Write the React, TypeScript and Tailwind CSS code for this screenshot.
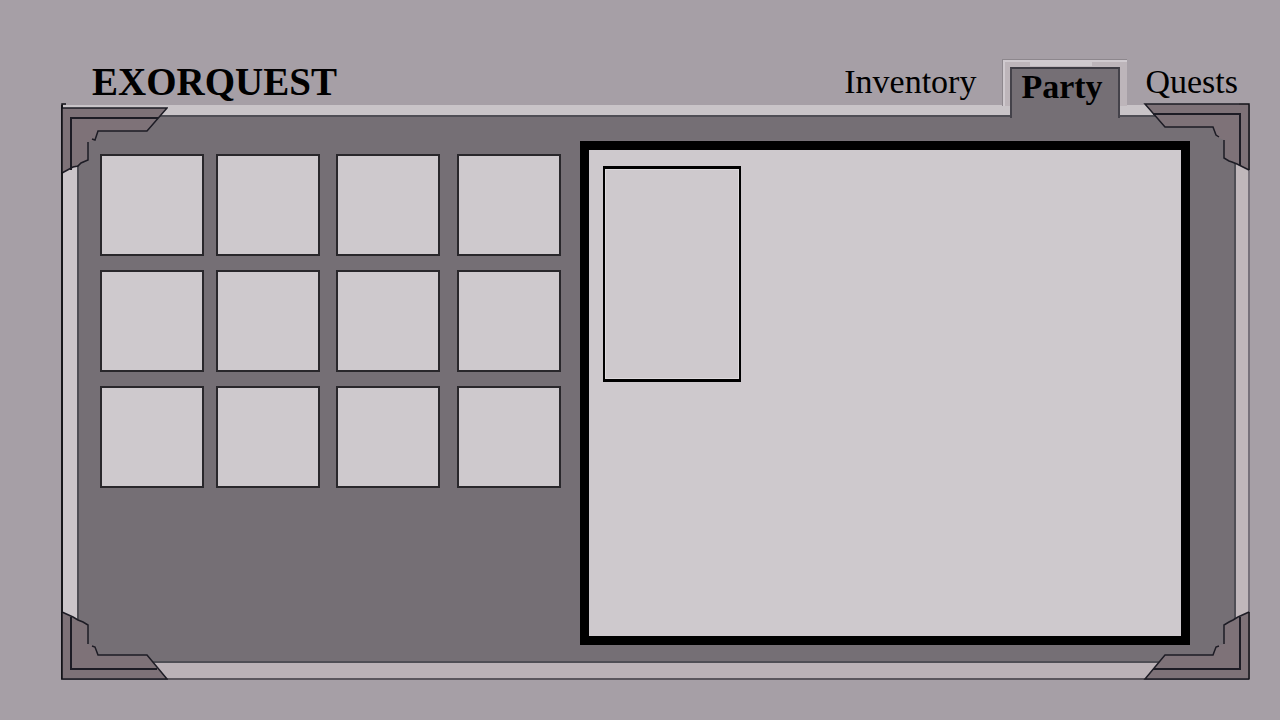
import { useState } from "react";

type CornerProps = { className: string; body: string; outline: string; edge: string; groove: string };

function Corner({ className, body, outline, edge, groove }: CornerProps) {
  return (
    <svg
      aria-hidden="true"
      viewBox="0 0 107 72"
      className={`pointer-events-none absolute h-[72px] w-[107px] ${className}`}
      fill="none"
      stroke="#1d1c25"
    >
      <path d={body} fill="#7e7278" stroke="none" />
      <path d={outline} strokeWidth="1.5" />
      <path d={groove} strokeWidth="2" />
      <path d={edge} stroke="#121217" strokeWidth="1.5" />
    </svg>
  );
}

const slots = Array.from({ length: 12 }, (_, i) => i + 1);
const tabs = ["Inventory", "Party", "Quests"];

export default function App() {
  const [selected, setSelected] = useState(0);

  return (
    <main className="flex min-h-screen flex-col bg-[#a69fa6] pt-[59px] pr-[30px] pb-10 pl-[61px] font-['Liberation_Serif',serif] text-black">
      <header className="flex h-[46px] items-start justify-between pr-3 pl-[31px]">
        <h1 className="text-[39px] leading-[46px] font-bold">EXORQUEST</h1>
        <nav className="flex items-start">
          {tabs.map((tab) =>
            tab === "Party" ? (
              <div
                key={tab}
                className="relative z-10 mr-[18px] ml-[26px] h-[47px] w-[125px] border-t border-l border-[#8d878d] bg-[#bdb5ba] px-[7px] pt-[7px] shadow-[inset_2px_2px_0_#d0cacf]"
              >
                <span className="absolute top-[2px] left-[27px] h-1 w-[62px] bg-[#cec9cd]" />
                <a
                  href="#party"
                  aria-current="page"
                  className="flex h-[51px] w-full border-x-2 border-t-2 border-x-[#44424a] border-t-[#3d3b43] bg-[#756f75] pl-[9px] text-[34px] leading-[36px] font-bold"
                >
                  {tab}
                </a>
              </div>
            ) : (
              <a key={tab} href={`#${tab.toLowerCase()}`} className="text-[34px] leading-[46px]">
                {tab}
              </a>
            ),
          )}
        </nav>
      </header>

      <section
        aria-label="Party"
        className="relative flex grow flex-col border-r-2 border-b-2 border-l-2 border-r-[#77717a] border-b-[#5b565d] border-l-[#17171b]"
      >
        <div className="flex grow flex-col border-t-[10px] border-r-[12px] border-b-[15px] border-l-[14px] border-t-[#c9c4c8] border-r-[#c0b7bb] border-b-[#bbb2b7] border-l-[#cbc5ca]">
          <div className="flex grow items-stretch border-2 border-[#4f4e55] bg-[#756f75] pt-6 pr-11 pb-4 pl-[21px]">
            <div className="grid shrink-0 grid-cols-[116px_120px_121px_104px] content-start gap-y-[14px] pt-[13px]">
              {slots.map((slot) => (
                <button
                  key={slot}
                  type="button"
                  aria-label={`Slot ${slot}`}
                  aria-pressed={selected === slot}
                  onClick={() => setSelected(slot)}
                  className="h-[102px] w-[104px] border-2 border-[#29272b] bg-[#cec9cd]"
                />
              ))}
            </div>
            <div className="ml-[19px] grow border-[9px] border-black bg-[#cec9cd] px-[14px] py-4">
              <div className="h-[216px] w-[138px] border-x-2 border-y-[3px] border-black shadow-[inset_0_0_0_1px_#dedadd]" />
            </div>
          </div>
        </div>

        <Corner
          className="-top-[2px] -left-[2px]"
          body="M1 5H106L86 28H37L34 37L27 39V57L1 70Z"
          outline="M1 5H106L86 28H37L34 37L31 36M27 39V57L20 60L17 63L12 64L1 70"
          groove="M10 67V15H97"
          edge="M5 1H1V71"
        />
        <Corner
          className="-top-[2px] -right-[2px]"
          body="M2 1H106V67L81 55V37L74 34L70 24H22Z"
          outline="M96 1H2L22 24H70L73 32L76 34M81 37V55L86 58L89 59L94 61L106 67"
          groove="M10 11H97V63"
          edge="M96 1H106V67"
        />
        <Corner
          className="-bottom-[2px] -left-[2px]"
          body="M1 4L27 17V36L34 38L37 47H86L106 71H1Z"
          outline="M1 4L12 9L17 12L22 14L27 17V36M31 38L34 39L37 47H86L106 71H1"
          groove="M10 9V61H96"
          edge="M1 4V71"
        />
        <Corner
          className="-right-[2px] -bottom-[2px]"
          body="M106 4L81 17V36L73 38L70 47H22L2 71H106Z"
          outline="M106 4L95 9L90 12L86 14L81 17V36M76 38L73 39L70 47H22L2 71H106"
          groove="M97 9V61H10"
          edge="M106 4V71"
        />
      </section>
    </main>
  );
}
